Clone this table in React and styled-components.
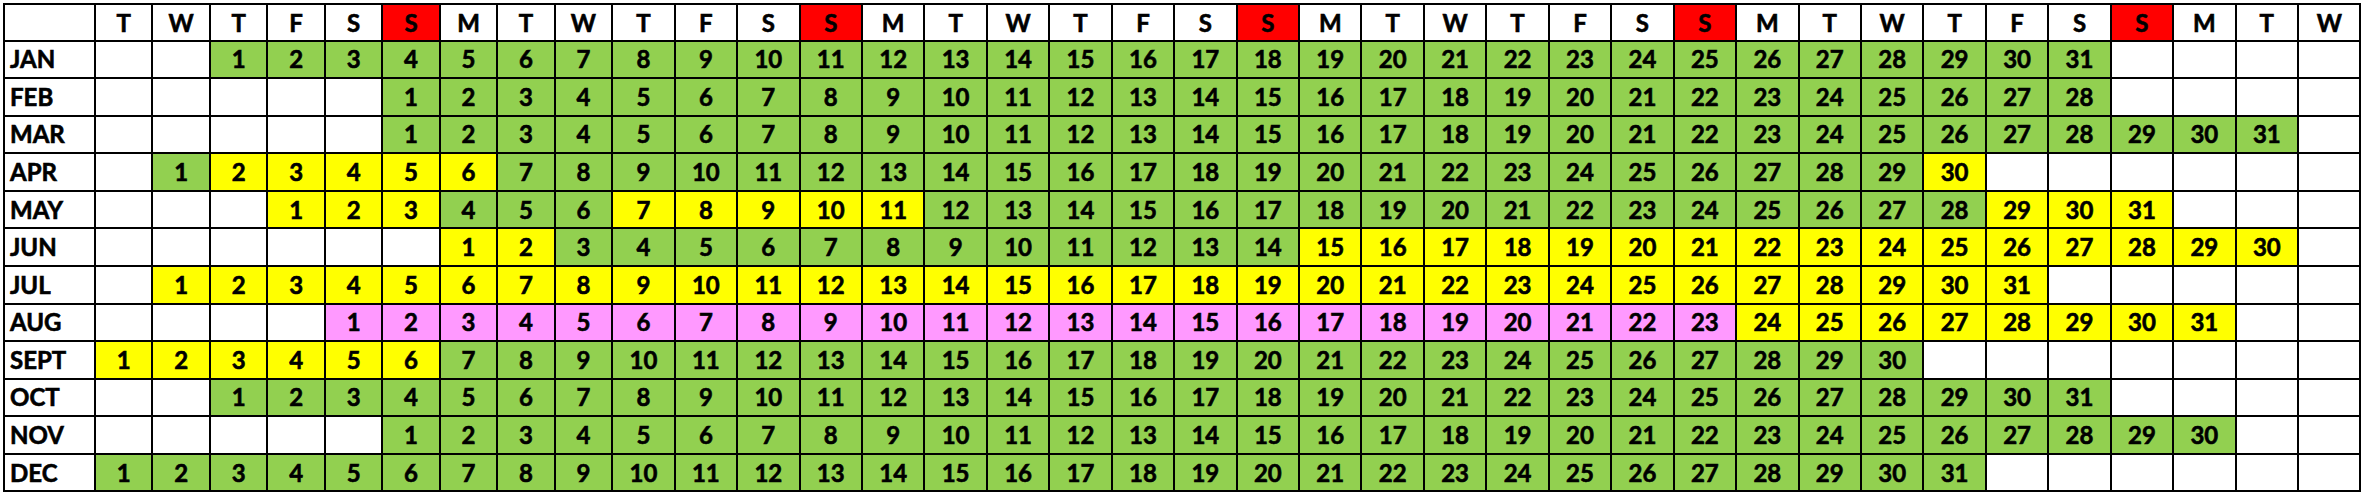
import React from "react";
import styled, { createGlobalStyle } from "styled-components";

const GlobalStyle = createGlobalStyle`
  body {
    margin: 0;
    background: #ffffff;
    font-family: Lato, "Open Sans", sans-serif;
  }
`;

const fills = {
  g: "#92d050",
  y: "#ffff00",
  p: "#ff99ff",
  w: "#ffffff",
};

const weekdays = ["T", "W", "T", "F", "S", "S", "M"];
const COLS = 37;

// start = column the 1st falls in, segs = [first day, colour] runs
const months = [
  { name: "JAN", start: 2, days: 31, segs: [[1, "g"]] },
  { name: "FEB", start: 5, days: 28, segs: [[1, "g"]] },
  { name: "MAR", start: 5, days: 31, segs: [[1, "g"]] },
  { name: "APR", start: 1, days: 30, segs: [[1, "g"], [2, "y"], [7, "g"], [30, "y"]] },
  { name: "MAY", start: 3, days: 31, segs: [[1, "y"], [4, "g"], [7, "y"], [12, "g"], [29, "y"]] },
  { name: "JUN", start: 6, days: 30, segs: [[1, "y"], [3, "g"], [15, "y"]] },
  { name: "JUL", start: 1, days: 31, segs: [[1, "y"]] },
  { name: "AUG", start: 4, days: 31, segs: [[1, "p"], [24, "y"]] },
  { name: "SEPT", start: 0, days: 30, segs: [[1, "y"], [7, "g"]] },
  { name: "OCT", start: 2, days: 31, segs: [[1, "g"]] },
  { name: "NOV", start: 5, days: 30, segs: [[1, "g"]] },
  { name: "DEC", start: 0, days: 31, segs: [[1, "g"]] },
];

const colourFor = (segs, day) => {
  let c = "w";
  segs.forEach(([from, col]) => {
    if (day >= from) c = col;
  });
  return c;
};

const Sheet = styled.div`
  display: grid;
  grid-template-columns: 89px repeat(9, 55.47px) repeat(28, 60.45px);
  grid-template-rows: 34.5px repeat(12, 35.58px);
  gap: 2px;
  padding: 2px;
  margin: 3px 0 0 3px;
  width: max-content;
  background: #000000;
`;

const Cell = styled.div`
  display: flex;
  align-items: center;
  justify-content: center;
  font-weight: 700;
  font-size: 24px;
  color: #000000;
  line-height: 1;
  -webkit-text-stroke: 0.6px #000000;
`;

const Corner = styled(Cell)`
  background: #ffffff;
`;

const HeaderCell = styled(Cell)`
  background: ${(p) => (p.$red ? "#ff0000" : "#ffffff")};
  padding-top: 1px;
`;

const MonthCell = styled(Cell)`
  justify-content: flex-start;
  padding-left: 5px;
  background: #ffffff;
`;

const DayCell = styled(Cell)`
  background: ${(p) => fills[p.$fill]};
`;

const App = () => {
  return (
    <>
      <GlobalStyle />
      <Sheet>
        <Corner />
        {Array.from({ length: COLS }, (_, i) => (
          <HeaderCell key={`h${i}`} $red={i % 7 === 5}>
            {weekdays[i % 7]}
          </HeaderCell>
        ))}
        {months.map((m) => (
          <React.Fragment key={m.name}>
            <MonthCell>{m.name}</MonthCell>
            {Array.from({ length: COLS }, (_, i) => {
              const day = i - m.start + 1;
              const inMonth = day >= 1 && day <= m.days;
              return (
                <DayCell
                  key={`${m.name}${i}`}
                  $fill={inMonth ? colourFor(m.segs, day) : "w"}
                >
                  {inMonth ? day : ""}
                </DayCell>
              );
            })}
          </React.Fragment>
        ))}
      </Sheet>
    </>
  );
};

export default App;
